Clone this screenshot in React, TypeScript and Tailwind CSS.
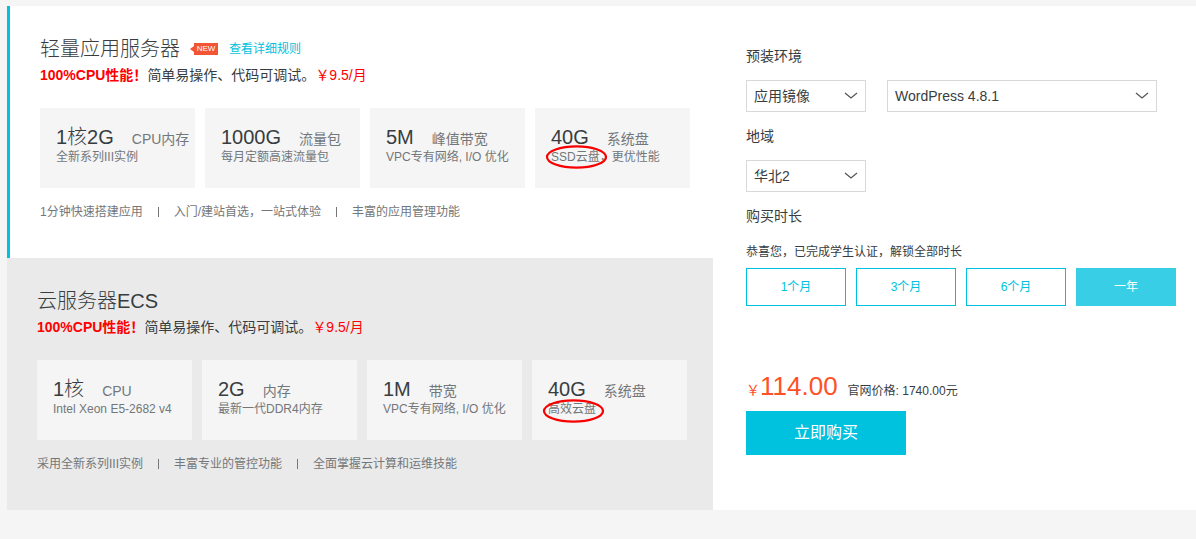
import React, { useState } from 'react';

interface Spec {
  value: string;
  name: string;
  circled?: string;
  detail?: string;
  ringClass?: string;
}

interface PlanProps {
  title: string;
  specs: Spec[];
  features: string[];
  selected?: boolean;
  children?: React.ReactNode;
}

const LIGHT_SPECS: Spec[] = [
  { value: '1核2G', name: 'CPU内存', detail: '全新系列III实例' },
  { value: '1000G', name: '流量包', detail: '每月定额高速流量包' },
  { value: '5M', name: '峰值带宽', detail: 'VPC专有网络, I/O 优化' },
  { value: '40G', name: '系统盘', circled: 'SSD云盘', detail: '，更优性能', ringClass: '-top-1' },
];

const ECS_SPECS: Spec[] = [
  { value: '1核', name: 'CPU', detail: 'Intel Xeon E5-2682 v4' },
  { value: '2G', name: '内存', detail: '最新一代DDR4内存' },
  { value: '1M', name: '带宽', detail: 'VPC专有网络, I/O 优化' },
  { value: '40G', name: '系统盘', circled: '高效云盘', ringClass: '-top-0.5' },
];

const DURATIONS = ['1个月', '3个月', '6个月', '一年'];

const SpecCard: React.FC<{ spec: Spec }> = ({ spec }) => (
  <div className="h-20 bg-[#f5f5f5] pl-4 pt-[17px] whitespace-nowrap">
    <div className="flex h-6 items-baseline gap-[18px]">
      <span className="text-xl leading-6 font-light text-[#373d41]">{spec.value}</span>
      <span className="text-sm leading-6 text-[#73777a]">{spec.name}</span>
    </div>
    <p className="text-xs leading-4 text-[#73777a]">
      {spec.circled && (
        <span className="relative inline-block">
          {spec.circled}
          <svg
            className={`absolute -left-1.5 w-[62px] h-6 ${spec.ringClass}`}
            viewBox="0 0 62 24"
            fill="none"
            aria-hidden="true"
          >
            <ellipse cx="31.5" cy="12" rx="29.5" ry="10.7" stroke="#f80000" strokeWidth="2.2" />
          </svg>
        </span>
      )}
      {spec.detail}
    </p>
  </div>
);

const Plan: React.FC<PlanProps> = ({ title, specs, features, selected, children }) => (
  <section
    className={
      selected
        ? 'border-l-[3px] border-[#00c1de] bg-white pl-[30px] pr-[23px] pt-[31px] pb-9'
        : 'bg-[#eaeaea] pl-[30px] pr-[26px] pt-[31px] pb-9'
    }
  >
    <div className="flex h-6 items-center">
      <h2 className="text-xl leading-6 font-light">{title}</h2>
      {children}
    </div>
    <p className="mt-1 text-sm leading-5">
      <b className="font-bold text-[#ff0000]">100%CPU性能！</b>
      简单易操作、代码可调试。
      <span className="text-[#ff0000]">￥9.5/月</span>
    </p>
    <div className="mt-[23px] grid grid-cols-4 gap-2.5">
      {specs.map((spec) => (
        <SpecCard key={spec.name} spec={spec} />
      ))}
    </div>
    <ul className="mt-3.5 flex items-center text-xs leading-5 text-[#73777a]">
      {features.map((feature, i) => (
        <li key={feature} className="flex items-center">
          {i > 0 && <span className="mx-[15px] h-2.5 w-px bg-[#73777a]" />}
          {feature}
        </li>
      ))}
    </ul>
  </section>
);

const SelectBox: React.FC<{ label: string; id: string; options: string[]; className: string }> = ({
  label,
  id,
  options,
  className,
}) => (
  <div className={`relative ${className}`}>
    <select
      id={id}
      aria-label={label}
      className="block h-8 w-full appearance-none border border-[#d7d8d9] bg-white pl-[7px] pr-8 text-sm"
    >
      {options.map((option) => (
        <option key={option}>{option}</option>
      ))}
    </select>
    <svg
      className="pointer-events-none absolute right-2 top-2.5 h-3 w-3.5"
      viewBox="0 0 14 12"
      fill="none"
      aria-hidden="true"
    >
      <path d="M1 3l6 5 6-5" stroke="#55595c" strokeWidth="1.3" />
    </svg>
  </div>
);

export default function App() {
  const [duration, setDuration] = useState<string>('一年');

  return (
    <div className="min-h-screen bg-[#f5f5f5] pl-[7px] pt-1.5 font-['Liberation_Sans','Noto_Sans_CJK_SC',sans-serif] text-[#373d41]">
      <main className="flex bg-white">
        <div className="w-[706px] shrink-0">
          <Plan
            title="轻量应用服务器"
            specs={LIGHT_SPECS}
            features={['1分钟快速搭建应用', '入门/建站首选，一站式体验', '丰富的应用管理功能']}
            selected
          >
            <span className="ml-2.5 flex items-center">
              <svg className="h-1.5 w-1" viewBox="0 0 4 6" aria-hidden="true">
                <path d="M4 0v6L0 3z" fill="#f15533" />
              </svg>
              <span className="h-3 w-6 bg-[#f15533] text-center text-[8px] leading-3 text-white">NEW</span>
            </span>
            <a href="#rules" className="ml-[11px] text-xs leading-5 text-[#00c1de]">
              查看详细规则
            </a>
          </Plan>
          <Plan
            title="云服务器ECS"
            specs={ECS_SPECS}
            features={['采用全新系列III实例', '丰富专业的管控功能', '全面掌握云计算和运维技能']}
          />
        </div>

        <form className="flex-1 pl-[33px] pr-5 pt-10" onSubmit={(e) => e.preventDefault()}>
          <label htmlFor="image-type" className="block text-sm leading-5">
            预装环境
          </label>
          <div className="mt-3.5 flex gap-[21px] pr-[19px]">
            <SelectBox id="image-type" label="预装环境" options={['应用镜像', '系统镜像']} className="w-[120px]" />
            <SelectBox id="image-name" label="镜像" options={['WordPress 4.8.1']} className="flex-1" />
          </div>

          <label htmlFor="region" className="mt-3.5 block text-sm leading-5">
            地域
          </label>
          <SelectBox id="region" label="地域" options={['华北2']} className="mt-3.5 w-[120px]" />

          <h3 className="mt-3.5 text-sm leading-5">购买时长</h3>
          <p className="mt-4 text-xs leading-5">恭喜您，已完成学生认证，解锁全部时长</p>
          <div className="mt-1.5 grid grid-cols-4 gap-2.5">
            {DURATIONS.map((item) => (
              <button
                key={item}
                type="button"
                onClick={() => setDuration(item)}
                className={
                  item === duration
                    ? 'h-[38px] bg-[#38cfe6] text-xs text-white'
                    : 'h-[38px] border border-[#00c1de] text-xs text-[#00c1de]'
                }
              >
                {item}
              </button>
            ))}
          </div>

          <div className="mt-[65px] flex h-[30px] items-baseline">
            <span className="text-sm text-[#ff5127]">￥</span>
            <span className="text-[26px] leading-[30px] text-[#ff5127]">114.00</span>
            <span className="ml-2.5 text-xs">官网价格: 1740.00元</span>
          </div>
          <button type="submit" className="mt-2.5 h-11 w-40 bg-[#00c1de] text-base text-white">
            立即购买
          </button>
        </form>
      </main>
    </div>
  );
}
